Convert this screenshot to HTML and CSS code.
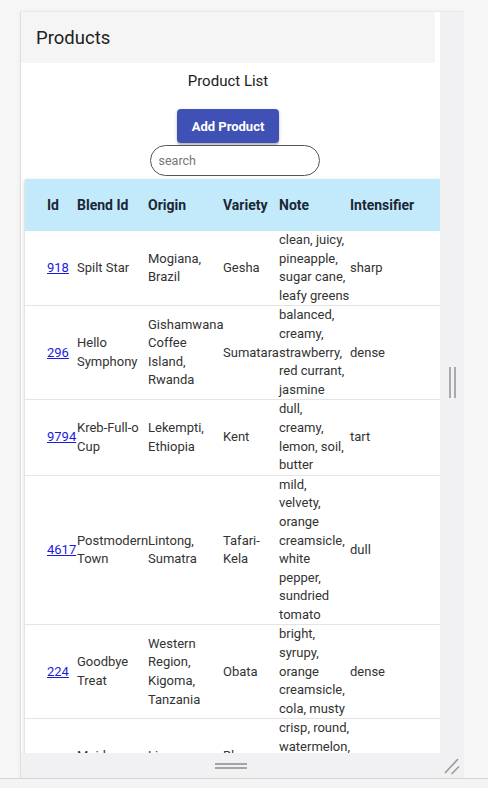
FILE: index.html
```html
<!DOCTYPE html>
<html>
<head>
<meta charset="utf-8">
<title>Products</title>
<link rel="stylesheet" href="styles.css">
</head>
<body>
<div class="stage">
  <div class="frame">
    <div class="viewport">
      <header class="app-bar"><h1>Products</h1></header>
      <main class="page">
        <h2 class="list-title">Product List</h2>
        <button class="add-btn" type="button">Add Product</button>
        <input class="search" type="text" placeholder="search">
        <div class="table-card">
          <table class="products">
            <colgroup>
              <col class="c-id"><col class="c-blend"><col class="c-origin"><col class="c-variety"><col class="c-note"><col class="c-int">
            </colgroup>
            <thead>
              <tr><th>Id</th><th>Blend Id</th><th>Origin</th><th>Variety</th><th>Note</th><th>Intensifier</th></tr>
            </thead>
            <tbody>
              <tr><td><a href="#">918</a></td><td>Spilt Star</td><td>Mogiana, Brazil</td><td>Gesha</td><td>clean, juicy, pineapple, sugar cane, leafy greens</td><td>sharp</td></tr>
              <tr><td><a href="#">296</a></td><td>Hello Symphony</td><td>Gishamwana Coffee Island, Rwanda</td><td>Sumatara</td><td>balanced, creamy, strawberry, red currant, jasmine</td><td>dense</td></tr>
              <tr><td><a href="#">9794</a></td><td>Kreb-Full-o Cup</td><td>Lekempti, Ethiopia</td><td>Kent</td><td>dull, creamy, lemon, soil, butter</td><td>tart</td></tr>
              <tr><td><a href="#">4617</a></td><td>Postmodern Town</td><td>Lintong, Sumatra</td><td>Tafari-Kela</td><td>mild, velvety, orange creamsicle, white pepper, sundried tomato</td><td>dull</td></tr>
              <tr><td><a href="#">224</a></td><td>Goodbye Treat</td><td>Western Region, Kigoma, Tanzania</td><td>Obata</td><td>bright, syrupy, orange creamsicle, cola, musty</td><td>dense</td></tr>
              <tr><td><a href="#">5120</a></td><td>Maiden Blend</td><td>Limu, Ethiopia</td><td>Blue Mountain</td><td>crisp, round, watermelon, honeydew, lemongrass, cedar</td><td>quick</td></tr>
            </tbody>
          </table>
        </div>
      </main>
    </div>
    <div class="side-panel">
      <div class="v-handle"><span></span><span></span></div>
    </div>
    <div class="bottom-bar">
      <div class="h-handle"><span></span><span></span></div>
      <div class="grip-cell">
        <svg class="grip" width="24" height="25" viewBox="0 0 24 25">
          <line x1="5" y1="20" x2="18" y2="6"/>
          <line x1="11.5" y1="21" x2="19" y2="13.5"/>
        </svg>
      </div>
    </div>
  </div>
</div>
<div class="floor"></div>
</body>
</html>
```

FILE: styles.css
```css
* { box-sizing: border-box; }
html, body { margin: 0; padding: 0; }
body {
  width: 488px;
  height: 788px;
  overflow: hidden;
  background: #f7f7f7;
  font-family: Roboto, "Helvetica Neue", Arial, sans-serif;
}
.stage {
  height: 779px;
  padding: 11px 0 0 20px;
  border-bottom: 1px solid #d5d5d5;
}
.frame {
  display: grid;
  grid-template-columns: 419px 24px;
  grid-template-rows: 741px 25px;
  width: 444px;
  border-left: 1px solid #dedede;
  border-top: 1px solid #e9e9e9;
  box-shadow: -2px -1px 4px rgba(0,0,0,0.03);
}
.viewport {
  background: #fff;
  overflow: hidden;
}
.app-bar {
  width: 414px;
  height: 51px;
  background: #f5f5f5;
  padding-left: 15px;
  display: flex;
  align-items: center;
}
.app-bar h1 {
  margin: 0;
  font-size: 18.5px;
  font-weight: 400;
  color: #212121;
}
.page {
  width: 414px;
  display: flex;
  flex-direction: column;
  align-items: center;
}
.list-title {
  margin: 9px 0 0;
  font-size: 15px;
  line-height: 18px;
  font-weight: 400;
  color: #212121;
}
.add-btn {
  margin-top: 19px;
  width: 102px;
  height: 34px;
  border: 0;
  border-radius: 4px;
  background: #3f51b5;
  color: #fff;
  font-family: Roboto, sans-serif;
  font-weight: 700;
  font-size: 13px;
  box-shadow: 0 2px 2px rgba(0,0,0,0.22), 0 1px 4px rgba(0,0,0,0.12);
}
.search {
  margin: 2px 0 0 13px;
  width: 170px;
  height: 31px;
  border: 1.5px solid #555;
  border-radius: 16px;
  padding: 0 8px;
  font-family: Roboto, sans-serif;
  font-size: 12.5px;
  color: #333;
  background: #fff;
  outline: none;
}
.search::placeholder { color: #777; }
.table-card {
  align-self: flex-start;
  margin: 3px 0 0 4px;
  width: 420px;
  background: #fff;
  box-shadow: 0 2px 1px -1px rgba(0,0,0,0.2), 0 1px 1px 0 rgba(0,0,0,0.14), -1px 1px 4px 0 rgba(0,0,0,0.14);
}
.products {
  width: 420px;
  table-layout: fixed;
  border-collapse: collapse;
}
.c-id { width: 52px; }
.c-blend { width: 71px; }
.c-origin { width: 75px; }
.c-variety { width: 56px; }
.c-note { width: 71px; }
.c-int { width: 95px; }
.products th {
  height: 52px;
  padding: 0;
  text-align: left;
  background: #c2eafb;
  color: #1b2735;
  font-size: 14px;
  font-weight: 700;
  white-space: nowrap;
}
.products td {
  padding: 0;
  font-size: 13px;
  line-height: 18.6px;
  color: #333;
  vertical-align: middle;
  border-bottom: 1px solid #e4e4e4;
}
.products th:first-child,
.products td:first-child { padding-left: 22px; }
.products a { color: #1a1add; }
.side-panel {
  background: #f1f1f3;
  display: flex;
  align-items: center;
  justify-content: center;
}
.v-handle { display: flex; gap: 3px; }
.v-handle span {
  width: 2px;
  height: 31px;
  background: #a9a9a9;
}
.bottom-bar {
  grid-column: 1 / 3;
  display: grid;
  grid-template-columns: 419px 24px;
  background: #f1f1f3;
}
.h-handle {
  display: flex;
  flex-direction: column;
  justify-content: center;
  align-items: center;
  gap: 2px;
}
.h-handle span {
  width: 32px;
  height: 2px;
  background: #a4a4a4;
}
.grip { display: block; }
.grip line { stroke: #9a9a9a; stroke-width: 1.6; }
.floor {
  height: 9px;
  background: #f4f4f4;
}
```
